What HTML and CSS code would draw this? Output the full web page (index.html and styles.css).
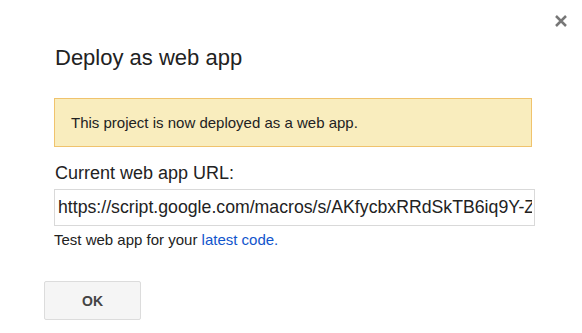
FILE: index.html
```html
<!DOCTYPE html>
<html lang="en">
<head>
    <meta charset="UTF-8">
    <meta name="viewport" content="width=device-width, initial-scale=1.0">
    <title>Deploy as web app</title>
    <link rel="stylesheet" href="styles.css">
</head>
<body>

    <div class="dialog">
        <!-- Close button -->
        <div class="dialog-top">
            <button class="close" aria-label="Close">
                <svg width="12" height="12" viewBox="0 0 12 12">
                    <path d="M1 1 L11 11 M11 1 L1 11" stroke="#777" stroke-width="2.5" fill="none"/>
                </svg>
            </button>
        </div>

        <div class="dialog-body">
            <h1 class="dialog-title">Deploy as web app</h1>

            <div class="notice">This project is now deployed as a web app.</div>

            <label class="url-label" for="appUrl">Current web app URL:</label>
            <input class="url-input" id="appUrl" type="text" readonly
                   value="https://script.google.com/macros/s/AKfycbxRRdSkTB6iq9Y-Zq4lJm0GvJkN3sWpA7QeTb1UxYz/exec">

            <p class="hint">Test web app for your <a href="#">latest code.</a></p>
        </div>

        <div class="dialog-footer">
            <button class="btn">OK</button>
        </div>
    </div>

</body>
</html>
```

FILE: styles.css
```css
* {
    margin: 0;
    padding: 0;
    box-sizing: border-box;
    font-family: 'Liberation Sans', Arial, sans-serif;
}

body {
    background-color: #fff;
    width: 582px;
    height: 333px;
    overflow: hidden;
}

.dialog-top {
    display: flex;
    justify-content: flex-end;
    padding: 15px 15px 18px 0;
}

.close {
    display: flex;
    width: 12px;
    height: 12px;
    border: none;
    background: none;
    cursor: pointer;
}

.dialog-body {
    display: flex;
    flex-direction: column;
    align-items: flex-start;
    padding: 0 50px 0 54px;
}

.dialog-title {
    font-size: 22px;
    line-height: 26px;
    font-weight: normal;
    color: #222;
    margin-left: 1px;
}

/* Yellow notice */
.notice {
    align-self: stretch;
    margin-top: 27px;
    padding: 15px 16px 14px 16px;
    font-size: 15px;
    line-height: 18px;
    color: #222;
    background-color: #f9edbe;
    border: 1px solid #f0c36d;
}

.url-label {
    margin-top: 16px;
    margin-left: 1px;
    font-size: 18px;
    line-height: 21px;
    color: #222;
}

.url-input {
    align-self: stretch;
    margin-top: 5px;
    margin-right: -3px;
    height: 37px;
    padding: 0 2px 0 3px;
    font-size: 17.7px;
    color: #222;
    background-color: #fff;
    border: 1px solid #d9d9d9;
    outline: none;
}

.hint {
    margin-top: 6px;
    font-size: 15px;
    line-height: 16px;
    color: #222;
}

.hint a {
    color: #15c;
    text-decoration: none;
}

.dialog-footer {
    padding: 33px 0 0 44px;
}

.btn {
    width: 97px;
    height: 39px;
    font-size: 14px;
    font-weight: bold;
    color: #444;
    background-color: #f5f5f5;
    border: 1px solid #dcdcdc;
    border-radius: 2px;
    cursor: pointer;
}
```
